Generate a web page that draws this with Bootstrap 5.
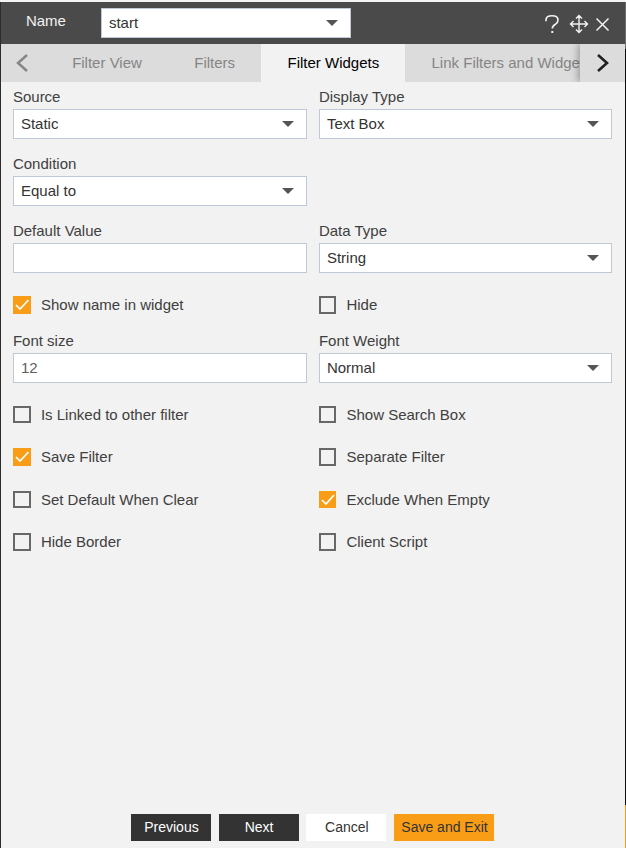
<!DOCTYPE html>
<html lang="en">
<head>
<meta charset="utf-8">
<meta name="viewport" content="width=device-width, initial-scale=1">
<title>Filter Widgets</title>
<link href="https://cdn.jsdelivr.net/npm/bootstrap@5.3.0/dist/css/bootstrap.min.css" rel="stylesheet">
<style>
body { font-family: "Liberation Sans", Arial, sans-serif; font-size: 15px; line-height: 20px; color: #404040; background: #f2f2f2; overflow: hidden; }
.dialog { height: 848px; padding-top: 2px; background: #f2f4f5; }
.edge-left { width: 1px; background: #2c2c2c; }
.edge-right { width: 1px; background: #0c0c0c; }
.edge-top { height: 47px; background: #6e6e6e; }
.edge-bottom { height: 43px; background: #f99d16; }
.panel { background: #f2f2f2; min-width: 0; }
.titlebar { height: 42px; background: #4a4a4a; color: #f2f2f2; padding: 6px 12.5px 0 25px; }
.title-label { width: 75px; padding-top: 3px; }
.title-tools { margin-top: 6px; }
.field { height: 30px; padding: 0 12px 0 7px; background: #fff; border: 1px solid #bfc8d6; color: #333; }
.field-name { width: 250px; }
.field .placeholder-value { color: #606060; }
.tabstrip { height: 38px; background: #dcdcdc; color: #858585; }
.tab-prev { width: 45px; padding-left: 15px; flex: none; }
.tab-list { min-width: 0; }
.tab-item { padding: 0 26.2px; white-space: nowrap; }
.tab-active { background: #f2f2f2; color: #000; }
.tab-next { width: 45px; flex: none; background: #dcdcdc; box-shadow: -2px 0 7px rgba(0,0,0,.3); clip-path: inset(0 0 0 -10px); }
.form-body { padding: 4px 12px 0; }
.pair { display: grid; grid-template-columns: 294px 293px; column-gap: 12px; }
.control { height: 67px; }
.control-label { height: 23px; padding-top: 1px; }
.check-row { height: 42.5px; padding-top: 8.5px; }
.check-row.wide-row { height: 43px; padding-top: 9px; }
.tick { width: 18px; height: 17.5px; border: 2px solid #686868; margin-right: 10px; flex: none; }
.pair > :nth-child(2) .tick { width: 17px; margin-right: 10.5px; }
.tick-on { border: 0; background: #f99d16; }
.check-text { margin-top: -1px; }
.actions { padding: 0 0 7px 130px; gap: 7.7px; }
.action { width: 80px; height: 27px; font-size: 14px; line-height: 20px; padding: 3px 0 4px 1px; border: 0; border-radius: 0; }
.action-dark, .action-dark:hover { background: #333; color: #fff; }
.action-light, .action-light:hover { background: #fff; color: #333; }
.action-main, .action-main:hover { background: #f99d16; color: #333; width: 100px; }
svg { display: block; flex: none; }
</style>
</head>
<body>
<div class="dialog d-flex">
  <div class="edge-left"></div>
  <main class="panel flex-grow-1 d-flex flex-column">
    <header class="titlebar d-flex align-items-start">
      <div class="title-label">Name</div>
      <div class="field field-name d-flex align-items-center justify-content-between"><span>start</span><svg width="12" height="6"><path d="M0 0h12L6 6z" fill="#555"/></svg></div>
      <div class="title-tools d-flex ms-auto" role="toolbar">
        <svg width="73" height="22" viewBox="0 0 73 22" fill="none" stroke="#f2f2f2" stroke-width="1.6">
          <path d="M6 7.2V6Q6 1.8 12 1.8T18 6Q18 8.5 15.5 10.2Q12.3 12 12.3 14.5"/>
          <path d="M11.3 18h2" stroke-width="2"/>
          <path d="M30.5 10h17M39 1.5v17M33.5 7l-3 3 3 3M44.500 7l3 3-3 3M36 4.500l3-3 3 3M36 15.500l3 3 3-3" stroke-width="1.400"/>
          <path d="M56.500 4.500l12 12M68.500 4.500l-12 12" stroke-width="1.500"/>
        </svg>
      </div>
    </header>
    <nav class="tabstrip d-flex overflow-hidden">
      <div class="tab-prev d-flex align-items-center"><svg width="12" height="18" fill="none" stroke="#858585" stroke-width="2.400"><path d="M11 1L2 9l9 8"/></svg></div>
      <div class="tab-list d-flex flex-grow-1 overflow-hidden">
        <div class="tab-item d-flex align-items-center">Filter View</div>
        <div class="tab-item d-flex align-items-center">Filters</div>
        <div class="tab-item tab-active d-flex align-items-center">Filter Widgets</div>
        <div class="tab-item d-flex align-items-center">Link Filters and Widgets</div>
      </div>
      <div class="tab-next d-flex align-items-center justify-content-center"><svg width="12" height="18" fill="none" stroke="#202020" stroke-width="2.600"><path d="M1 1l9 8-9 8"/></svg></div>
    </nav>
    <section class="form-body flex-grow-1">
      <div class="pair">
        <div class="control"><div class="control-label">Source</div><div class="field d-flex align-items-center justify-content-between"><span>Static</span><svg width="12" height="6"><path d="M0 0h12L6 6z" fill="#555"/></svg></div></div>
        <div class="control"><div class="control-label">Display Type</div><div class="field d-flex align-items-center justify-content-between"><span>Text Box</span><svg width="12" height="6"><path d="M0 0h12L6 6z" fill="#555"/></svg></div></div>
      </div>
      <div class="pair">
        <div class="control"><div class="control-label">Condition</div><div class="field d-flex align-items-center justify-content-between"><span>Equal to</span><svg width="12" height="6"><path d="M0 0h12L6 6z" fill="#555"/></svg></div></div>
      </div>
      <div class="pair">
        <div class="control"><div class="control-label">Default Value</div><div class="field"></div></div>
        <div class="control"><div class="control-label">Data Type</div><div class="field d-flex align-items-center justify-content-between"><span>String</span><svg width="12" height="6"><path d="M0 0h12L6 6z" fill="#555"/></svg></div></div>
      </div>
      <div class="pair">
        <div class="check-row wide-row d-flex align-items-start"><span class="tick tick-on"><svg width="18" height="17"><path d="M3 9l4 4 8.500-9" fill="none" stroke="#fff" stroke-width="1.700"/></svg></span><span class="check-text">Show name in widget</span></div>
        <div class="check-row wide-row d-flex align-items-start"><span class="tick"></span><span class="check-text">Hide</span></div>
      </div>
      <div class="pair">
        <div class="control"><div class="control-label">Font size</div><div class="field d-flex align-items-center"><span class="placeholder-value">12</span></div></div>
        <div class="control"><div class="control-label">Font Weight</div><div class="field d-flex align-items-center justify-content-between"><span>Normal</span><svg width="12" height="6"><path d="M0 0h12L6 6z" fill="#555"/></svg></div></div>
      </div>
      <div class="pair">
        <div class="check-row d-flex align-items-start"><span class="tick"></span><span class="check-text">Is Linked to other filter</span></div>
        <div class="check-row d-flex align-items-start"><span class="tick"></span><span class="check-text">Show Search Box</span></div>
      </div>
      <div class="pair">
        <div class="check-row d-flex align-items-start"><span class="tick tick-on"><svg width="18" height="17"><path d="M3 9l4 4 8.500-9" fill="none" stroke="#fff" stroke-width="1.700"/></svg></span><span class="check-text">Save Filter</span></div>
        <div class="check-row d-flex align-items-start"><span class="tick"></span><span class="check-text">Separate Filter</span></div>
      </div>
      <div class="pair">
        <div class="check-row d-flex align-items-start"><span class="tick"></span><span class="check-text">Set Default When Clear</span></div>
        <div class="check-row d-flex align-items-start"><span class="tick tick-on"><svg width="17" height="17"><path d="M3 9l4 4 8-9" fill="none" stroke="#fff" stroke-width="1.700"/></svg></span><span class="check-text">Exclude When Empty</span></div>
      </div>
      <div class="pair">
        <div class="check-row d-flex align-items-start"><span class="tick"></span><span class="check-text">Hide Border</span></div>
        <div class="check-row d-flex align-items-start"><span class="tick"></span><span class="check-text">Client Script</span></div>
      </div>
    </section>
    <footer class="actions d-flex">
      <button type="button" class="btn action action-dark">Previous</button>
      <button type="button" class="btn action action-dark">Next</button>
      <button type="button" class="btn action action-light">Cancel</button>
      <button type="button" class="btn action action-main">Save and Exit</button>
    </footer>
  </main>
  <div class="edge-right d-flex flex-column justify-content-between"><div class="edge-top"></div><div class="edge-bottom"></div></div>
</div>
<script src="https://cdn.jsdelivr.net/npm/bootstrap@5.3.0/dist/js/bootstrap.bundle.min.js"></script>
</body>
</html>
